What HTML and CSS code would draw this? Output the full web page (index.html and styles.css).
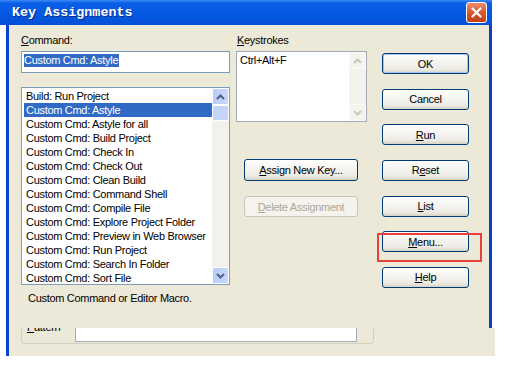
FILE: index.html
```html
<!doctype html>
<html>
<head>
  <title>Key Assignments</title>
  <link rel="stylesheet" href="styles.css">
</head>
<body>

<div class="window">
  <div class="titlebar">
    <span class="title">Key Assignments</span>
    <span class="close-btn">
      <svg width="11" height="11" viewBox="0 0 11 11"><path d="M1.5 1.5 L9.5 9.5 M9.5 1.5 L1.5 9.5" stroke="#fff" stroke-width="2.2" stroke-linecap="round"/></svg>
    </span>
  </div>

  <div class="frame">
    <!-- left: command list -->
    <div class="col-left">
      <div class="label"><u>C</u>ommand:</div>
      <div class="textbox"><span class="sel">Custom Cmd: Astyle</span></div>
      <div class="listbox">
        <ul class="items">
          <li>Build: Run Project</li>
          <li class="selected">Custom Cmd: Astyle</li>
          <li>Custom Cmd: Astyle for all</li>
          <li>Custom Cmd: Build Project</li>
          <li>Custom Cmd: Check In</li>
          <li>Custom Cmd: Check Out</li>
          <li>Custom Cmd: Clean Build</li>
          <li>Custom Cmd: Command Shell</li>
          <li>Custom Cmd: Compile File</li>
          <li>Custom Cmd: Explore Project Folder</li>
          <li>Custom Cmd: Preview in Web Browser</li>
          <li>Custom Cmd: Run Project</li>
          <li>Custom Cmd: Search In Folder</li>
          <li>Custom Cmd: Sort File</li>
        </ul>
        <div class="vscroll">
          <div class="sb-btn"><svg width="9" height="6" viewBox="0 0 9 6"><path d="M1 5 L4.5 1.5 L8 5" fill="none" stroke="#4d6185" stroke-width="2"/></svg></div>
          <div class="sb-thumb"></div>
          <div class="sb-track"></div>
          <div class="sb-btn"><svg width="9" height="6" viewBox="0 0 9 6"><path d="M1 1 L4.5 4.5 L8 1" fill="none" stroke="#4d6185" stroke-width="2"/></svg></div>
        </div>
      </div>
      <div class="desc">Custom Command or Editor Macro.</div>
    </div>

    <!-- middle: keystrokes -->
    <div class="col-mid">
      <div class="label"><u>K</u>eystrokes</div>
      <div class="keybox">
        <div class="keys">Ctrl+Alt+F</div>
        <div class="vscroll disabled">
          <div class="sb-btn"><svg width="9" height="6" viewBox="0 0 9 6"><path d="M1 5 L4.5 1.5 L8 5" fill="none" stroke="#c9c7ba" stroke-width="2"/></svg></div>
          <div class="sb-track"></div>
          <div class="sb-btn"><svg width="9" height="6" viewBox="0 0 9 6"><path d="M1 1 L4.5 4.5 L8 1" fill="none" stroke="#c9c7ba" stroke-width="2"/></svg></div>
        </div>
      </div>
      <button class="btn wide assign"><u>A</u>ssign New Key...</button>
      <button class="btn wide disabled"><u>D</u>elete Assignment</button>
    </div>

    <!-- right: action buttons -->
    <div class="col-right">
      <button class="btn default">OK</button>
      <button class="btn">Cancel</button>
      <button class="btn"><u>R</u>un</button>
      <button class="btn">R<u>e</u>set</button>
      <button class="btn"><u>L</u>ist</button>
      <button class="btn"><u>M</u>enu...</button>
      <button class="btn"><u>H</u>elp</button>
    </div>

    <div class="mark"></div>
  </div>

  <div class="pattern-strip">
    <div class="group">
      <span class="pattern-label"><u>P</u>attern</span>
      <div class="pattern-input"></div>
    </div>
  </div>
</div>

</body>
</html>
```

FILE: styles.css
```css
body {
  margin: 0;
  background: #fff;
  font-family: "Liberation Sans", Arial, sans-serif;
  font-size: 11px;
  letter-spacing: -0.3px;
  color: #000;
}

.window {
  width: 495px;
}

.titlebar {
  width: 492px;
  height: 25px;
  background: linear-gradient(to bottom, #3b8cf5 0%, #0a5fe6 12%, #0458e0 60%, #0750d6 100%);
  display: flex;
  align-items: center;
  justify-content: space-between;
  box-sizing: border-box;
  padding: 0 5px 0 12px;
}

.title {
  font-family: "Liberation Mono", "DejaVu Sans Mono", monospace;
  font-weight: bold;
  font-size: 13.4px;
  letter-spacing: 0;
  color: #fff;
  text-shadow: 1px 1px 0 #0a2a8a;
}

.close-btn {
  width: 21px;
  height: 21px;
  box-sizing: border-box;
  border: 1px solid #fff;
  border-radius: 3px;
  background: linear-gradient(to bottom, #ec8e6f, #d9582f 50%, #c43d16);
  display: flex;
  align-items: center;
  justify-content: center;
}

.frame {
  position: relative;
  display: flex;
  margin-left: 6px;
  width: 486px;
  height: 303px;
  box-sizing: border-box;
  padding-top: 8px;
  background: #ece9d8;
  border-left: 3px solid #0841d0;
  border-right: 3px solid #0841d0;
}

.label {
  height: 14px;
  line-height: 14px;
  margin-bottom: 4px;
}

/* left column */
.col-left {
  margin-left: 12px;
  width: 209px;
}

.textbox {
  height: 22px;
  box-sizing: border-box;
  border: 1px solid #7f9db9;
  background: #fff;
  padding: 2px 0 0 2px;
}

.sel {
  display: inline-block;
  background: #316ac5;
  color: #fff;
  line-height: 13px;
  padding-right: 1px;
}

.listbox {
  margin-top: 14px;
  height: 198px;
  box-sizing: border-box;
  border: 1px solid #7f9db9;
  background: #fff;
  display: flex;
}

.items {
  list-style: none;
  margin: 0;
  padding: 1px 0 0 2px;
  flex: 1;
}

.items li {
  height: 14px;
  line-height: 14px;
  padding-left: 2px;
  white-space: nowrap;
}

.items li.selected {
  background: #316ac5;
  color: #fff;
}

.vscroll {
  width: 17px;
  display: flex;
  flex-direction: column;
  background: #f3f1ec;
}

.sb-btn {
  height: 17px;
  box-sizing: border-box;
  border: 1px solid #fff;
  border-radius: 2px;
  background: linear-gradient(to right, #b9cdf8, #c8d8fb);
  display: flex;
  align-items: center;
  justify-content: center;
}

.sb-thumb {
  height: 16px;
  box-sizing: border-box;
  border: 1px solid #fff;
  border-radius: 2px;
  background: #c5d5fa;
}

.sb-track {
  flex: 1;
}

.vscroll.disabled .sb-btn {
  background: #f4f3ee;
  border-color: #fbfbf8;
}

.desc {
  margin-top: 6px;
  padding-left: 7px;
  line-height: 14px;
}

/* middle column */
.col-mid {
  margin-left: 6px;
  width: 131px;
}

.col-mid .label {
  padding-left: 1px;
}

.keybox {
  height: 71px;
  box-sizing: border-box;
  border: 1px solid #a5acb5;
  background: #fff;
  display: flex;
}

.keys {
  flex: 1;
  padding: 1px 0 0 3px;
  line-height: 14px;
}

.btn {
  display: block;
  height: 21px;
  width: 87px;
  padding: 0;
  box-sizing: border-box;
  border: 1px solid #003c74;
  border-radius: 3px;
  background: linear-gradient(to bottom, #ffffff 0%, #f4f3ee 45%, #ecebe4 80%, #d8d2c6 100%);
  font-family: "Liberation Sans", Arial, sans-serif;
  font-size: 11px;
  letter-spacing: -0.3px;
  color: #000;
  text-align: center;
}

.btn.wide {
  width: 114px;
  margin-left: 8px;
}

.btn.assign {
  margin-top: 37px;
  height: 22px;
}

.btn.disabled {
  margin-top: 15px;
  border-color: #c9c7ba;
  background: #f4f3ee;
  color: #aca899;
}

.btn.default {
  box-shadow: inset 0 0 0 1px #a8c4f0;
}

/* right column */
.col-right {
  margin-left: 15px;
  width: 87px;
  padding-top: 20px;
  display: flex;
  flex-direction: column;
  gap: 14.67px;
}

.mark {
  position: absolute;
  left: 368px;
  top: 208px;
  width: 105px;
  height: 29px;
  box-sizing: border-box;
  border: 2px solid #e8413c;
}

/* pasted strip with the pattern row */
.pattern-strip {
  margin-left: 6px;
  width: 489px;
  height: 28px;
  box-sizing: border-box;
  border-left: 3px solid #0841d0;
  background: #ece9d8;
  overflow: hidden;
}

.group {
  margin-left: 12px;
  width: 353px;
  height: 16px;
  box-sizing: border-box;
  border: 1px solid #d0d0bf;
  border-top: none;
  border-radius: 0 0 4px 4px;
  display: flex;
  align-items: flex-start;
  overflow: hidden;
}

.pattern-label {
  margin-left: 5px;
  margin-top: -8px;
  width: 48px;
  line-height: 14px;
}

.pattern-input {
  width: 282px;
  height: 14px;
  box-sizing: border-box;
  border: 1px solid #a5acb5;
  border-top: none;
  background: #fff;
}
```
